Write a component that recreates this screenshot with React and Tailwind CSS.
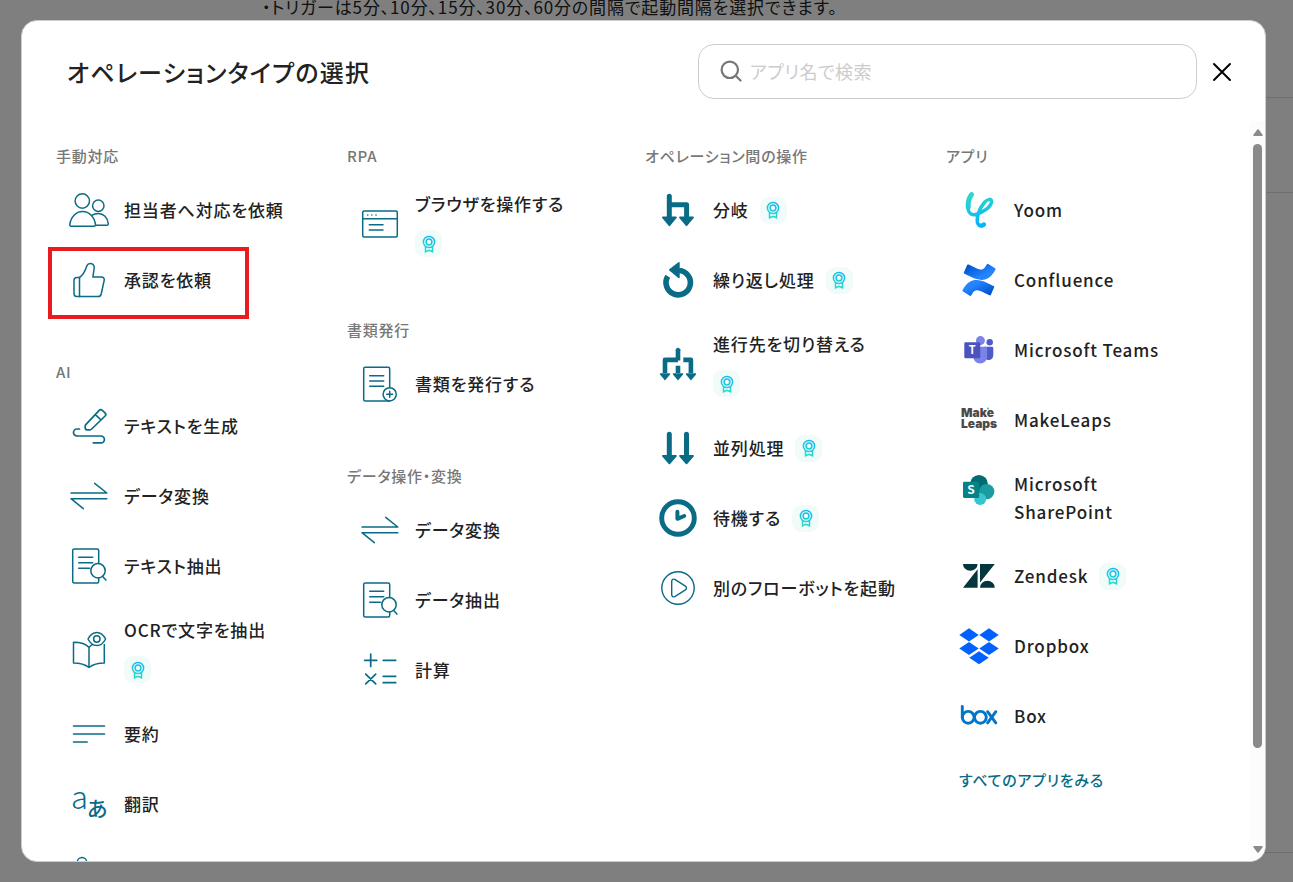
import { useState } from "react";

/* ---------- line icons ---------- */

const LineIcon = ({ children, width = 1.5 }) => (
  <svg
    viewBox="0 0 42 42"
    className="size-[42px] shrink-0 text-[#0a6b86]"
    fill="none"
    stroke="currentColor"
    strokeWidth={width}
    strokeLinecap="round"
    strokeLinejoin="round"
    aria-hidden="true"
  >
    {children}
  </svg>
);

const PeopleIcon = () => (
  <LineIcon>
    <circle cx="14.3" cy="12" r="7.2" />
    <circle cx="30.3" cy="16.8" r="5.7" />
    <path d="M3.2 37.3h22.9c.9 0 1.5-.8 1.4-1.7C26.5 27.8 21.2 22.6 14.6 22.6S2.8 27.8 1.8 35.6c-.1.9.5 1.7 1.4 1.7z" />
    <path d="M23.8 26.4c1.9-1.3 4-2 6.4-2 5.3 0 9.5 4.3 10.1 10.3.1.8-.5 1.5-1.3 1.5H27.6" />
  </LineIcon>
);

const ThumbIcon = () => (
  <LineIcon>
    <path d="M11.5 18.5C15.6 16 17.4 11.5 19 6.6c.5-1.4 1.7-2.1 3.1-2.1 2.6 0 4.5 1.8 4.1 4.4L24.9 18h8.6c1.9 0 3.1 1.6 2.7 3.4l-3 13.6c-.4 1.6-1.6 2.6-3.2 2.6H11.5z" />
    <path d="M11.5 18.5H9c-1.8 0-3 1.2-3 3v13c0 1.8 1.2 3.1 3 3.1h2.5" />
  </LineIcon>
);

const PenIcon = () => (
  <LineIcon width={1.7}>
    <path d="M11.5 24H9a3.5 3.5 0 0 0 0 7h24a3.4 3.4 0 0 1 0 6.8h-7.7" />
    <path d="M17.8 19.6 31.2 5.4a2.2 2.2 0 0 1 3.1-.1l2.7 2.6a2.2 2.2 0 0 1 .1 3.1L23.7 24c-.5.5-1.1.8-1.8.8h-2.7c-1.2 0-2-.8-2-2v-1.6c0-.6.2-1.1.6-1.6zM27.4 9.6l5.6 5.4" />
  </LineIcon>
);

const SwapIcon = () => (
  <LineIcon>
    <path d="M26.7 8.3 38.8 18H3M15.3 33.7 3 23.7h35.8" />
  </LineIcon>
);

const DocSearchIcon = () => (
  <LineIcon>
    <path d="M30.7 18.5V5.5c0-.8-.7-1.5-1.5-1.5h-23c-.8 0-1.5.7-1.5 1.5v31c0 .8.7 1.5 1.5 1.5h23c.8 0 1.5-.7 1.5-1.5V33" />
    <path d="M10.7 12.3h14M10.7 17.7h14M10.7 23.3h10.6" />
    <circle cx="30" cy="25.7" r="7.2" />
    <path d="m34.7 31.4 3.2 3.7" />
  </LineIcon>
);

const DocPlusIcon = () => (
  <LineIcon>
    <path d="M30.7 24.6V5.8c0-.8-.7-1.5-1.5-1.5h-23c-.8 0-1.5.7-1.5 1.5v30.7c0 .8.7 1.5 1.5 1.5h24.5" />
    <path d="M10.7 12.7h14M10.7 18h14M10.7 23.3h14" />
    <circle cx="30.7" cy="31.3" r="6.6" />
    <path d="M27.7 31.3h6M30.7 28.3v6" />
  </LineIcon>
);

const BookEyeIcon = () => (
  <LineIcon>
    <path d="M21 18.5c-3.5-4-9.5-5.2-15.5-5.2V34c6 0 11 1 15.5 4.5C25.5 35 30.3 34 36.3 34V15.6M21 18.5V38M21 18.5c1-1.4 2.2-2.3 3.7-3.1" />
    <path d="M20 10c2.2-4.3 5.2-6.6 8.8-6.6s6.6 2.3 8.8 6.6c-2.2 4.3-5.2 6.6-8.8 6.6S22.2 14.3 20 10z" />
    <circle cx="28.8" cy="10" r="3.2" />
  </LineIcon>
);

const LinesIcon = () => (
  <LineIcon width={1.7}>
    <path d="M5.6 13h30.8M5.6 21h30.8M5.6 29h13.5" />
  </LineIcon>
);

const TranslateIcon = () => (
  <svg viewBox="0 0 42 42" className="size-[42px] shrink-0 overflow-visible" fill="#0a6b86" aria-hidden="true">
    <text x="3" y="26" fontSize="31" fontWeight="300">a</text>
    <text x="19" y="33" fontSize="21" fontWeight="500">あ</text>
  </svg>
);

const VoiceIcon = () => (
  <LineIcon>
    <circle cx="14" cy="9" r="4.6" />
    <path d="M5 36V24c0-4 4-7 9-7s9 3 9 7v12M29 14v14M35 18v6" />
  </LineIcon>
);

const BrowserIcon = () => (
  <LineIcon>
    <rect x="3.7" y="8" width="34.6" height="26" rx="1.5" />
    <path d="M3.7 15.7h34.6M10.3 21.7H24M10.3 27H24" />
    <path d="M8.7 12h.1M12.8 12h.1M17 12h.1" />
  </LineIcon>
);

const CalcIcon = () => (
  <LineIcon width={1.7}>
    <path d="M11.7 5.2v12.2M5.6 11.3h12.2M24.2 11.3h12.5M24.2 27.3h12.5M24.2 33.7h12.5M6.7 25.2l10 9.6M16.7 25.2l-10 9.6" />
  </LineIcon>
);

const PlayIcon = () => (
  <LineIcon width={1.4}>
    <circle cx="21" cy="21" r="16.2" />
    <path d="M14.7 14.3v13.4c0 1.8 1.6 2.7 3.1 1.9l10.6-6.7c1.4-.9 1.4-2.9 0-3.8l-10.6-6.7c-1.5-.8-3.1.1-3.1 1.9z" />
  </LineIcon>
);

/* ---------- solid flow icons ---------- */

const SolidIcon = ({ children }) => (
  <svg
    viewBox="0 0 42 42"
    className="size-[42px] shrink-0 text-[#0a6b86]"
    fill="currentColor"
    stroke="currentColor"
    strokeLinejoin="round"
    strokeLinecap="round"
    aria-hidden="true"
  >
    {children}
  </svg>
);

const BranchIcon = () => (
  <SolidIcon>
    <path d="M12.3 7.2V29M12.3 15.8h17.3V29" fill="none" strokeWidth="5" />
    <path d="M5.9 28.5h13l-6.5 7.7zM23 28.5h13l-6.5 7.7z" strokeWidth="1.8" />
  </SolidIcon>
);

const LoopIcon = () => (
  <SolidIcon>
    <path d="M22 11.5A12.2 12.2 0 1 1 10.8 17.3" fill="none" strokeWidth="5.6" strokeLinecap="butt" />
    <path d="M12.8 10.8 21.9 3.8v14.6z" strokeWidth="1.6" />
  </SolidIcon>
);

const SwitchIcon = () => (
  <SolidIcon>
    <path d="M21 6.6v11M8 30V16.9h13M26.3 16.9h7.6V30M21 22.8V30" fill="none" strokeWidth="4.6" strokeLinecap="butt" />
    <path d="M3.6 31h8.8L8 36.3zM16.6 31h8.8L21 36.3zM29.6 31h8.8L34 36.3z" strokeWidth="1.6" />
    <circle cx="21" cy="7" r="1.8" strokeWidth="1" />
  </SolidIcon>
);

const ParallelIcon = () => (
  <SolidIcon>
    <path d="M12.3 7.2V29M29.5 7.2V29" fill="none" strokeWidth="5" />
    <path d="M5.9 29h13l-6.5 7.4zM23 29h13l-6.5 7.4z" strokeWidth="1.8" />
  </SolidIcon>
);

const ClockIcon = () => (
  <SolidIcon>
    <circle cx="21" cy="21" r="16.3" fill="none" strokeWidth="4.9" />
    <path d="M20.4 14.8v7l6.8-2.8" fill="none" strokeWidth="4" />
  </SolidIcon>
);

/* ---------- app logos ---------- */

const Logo = ({ children }) => (
  <svg viewBox="0 0 42 42" className="size-[42px] shrink-0" aria-hidden="true">
    {children}
  </svg>
);

const YoomLogo = () => (
  <Logo>
    <defs>
      <linearGradient id="yoom" gradientUnits="userSpaceOnUse" x1="15" y1="3" x2="24" y2="39">
        <stop offset="0" stopColor="#2fdcc4" />
        <stop offset="1" stopColor="#05b0ff" />
      </linearGradient>
    </defs>
    <g fill="none" stroke="url(#yoom)" strokeLinecap="round">
      <path d="M13.6 5.6C11 9 9.9 14 10.2 18" strokeWidth="5" />
      <path d="M13 6C10 10 9.2 15 9.9 19.5c.8 4.7 3.6 7 7.6 6C24 24 33 18.5 33.6 12.5c.2-3.2-4-2.8-7.2 1-3.5 4.3-6.8 11.5-7.2 17-.3 4.6 1.8 6.7 4.3 6.3 1.3-.2 2.2-.8 2.8-1.5" strokeWidth="3.5" />
      <path d="M22.4 36.5c1.4.3 2.7-.2 3.4-1.1" strokeWidth="4.2" />
    </g>
  </Logo>
);

const ConfluenceLogo = () => (
  <svg viewBox="-34 -38 323 323" className="size-[42px] shrink-0" aria-hidden="true">
    <defs>
      <linearGradient id="confA" x1="1" y1="1" x2="0.2" y2="0.3">
        <stop offset="0.15" stopColor="#0052cc" />
        <stop offset="0.9" stopColor="#2684ff" />
      </linearGradient>
      <linearGradient id="confB" x1="0" y1="0" x2="0.8" y2="0.7">
        <stop offset="0.15" stopColor="#0052cc" />
        <stop offset="0.9" stopColor="#2684ff" />
      </linearGradient>
    </defs>
    <path fill="url(#confA)" d="M9.26 187.33c-2.64 4.307-5.607 9.305-8.126 13.287a8.127 8.127 0 0 0 2.722 11.052l52.823 32.507a8.127 8.127 0 0 0 11.256-2.763c2.113-3.536 4.835-8.127 7.801-13.044 20.926-34.538 41.974-30.312 79.925-12.19l52.376 24.908a8.127 8.127 0 0 0 10.93-4.063l25.152-56.886a8.127 8.127 0 0 0-4.063-10.646c-11.052-5.201-33.034-15.562-52.823-25.111-71.189-34.579-131.691-32.344-177.973 42.949z" />
    <path fill="url(#confB)" d="M246.115 58.232c2.641-4.307 5.607-9.305 8.127-13.287a8.127 8.127 0 0 0-2.723-11.052L198.696 1.386a8.127 8.127 0 0 0-11.58 2.682c-2.113 3.535-4.835 8.127-7.802 13.043-20.926 34.538-41.974 30.313-79.925 12.19L47.176 4.515a8.127 8.127 0 0 0-10.93 4.063L11.093 65.464a8.127 8.127 0 0 0 4.063 10.646c11.052 5.202 33.035 15.563 52.823 25.112 71.352 34.538 131.854 32.222 178.136-42.99z" />
  </svg>
);

const TeamsLogo = () => (
  <Logo>
    <circle cx="31.7" cy="13.3" r="3.2" fill="#5059c9" />
    <path d="M26 17.7h8c.7 0 1.3.6 1.3 1.3v7c0 3-2.2 5-4.8 5S26 29 26 26z" fill="#5059c9" />
    <circle cx="22.4" cy="11.6" r="4.5" fill="#7b83eb" />
    <path d="M15.3 17.7h12.4c.8 0 1.4.6 1.4 1.4v8.3c0 4-3 7-6.9 7s-6.9-3-6.9-7z" fill="#7b83eb" />
    <rect x="6.3" y="13.3" width="16" height="16" rx="1.4" fill="#4b53bc" />
    <text x="14.3" y="25.4" fontSize="11" fontWeight="700" fill="#fff" textAnchor="middle">T</text>
  </Logo>
);

const MakeLeapsLogo = () => (
  <Logo>
    <g className="font-['Inter',sans-serif] font-black" fill="#4a4a4a" fontSize="12">
      <text x="3" y="18">Make</text>
      <text x="3" y="29">Leaps</text>
    </g>
    <circle cx="30" cy="9.5" r="1" fill="#3fbf8a" />
  </Logo>
);

const SharePointLogo = () => (
  <Logo>
    <circle cx="21" cy="13.7" r="8.8" fill="#036c70" />
    <circle cx="28.7" cy="21.6" r="7.7" fill="#1a9ba1" />
    <circle cx="22.2" cy="29" r="6" fill="#37c6d0" />
    <rect x="5" y="11.7" width="16.2" height="16.2" rx="1.4" fill="#038387" />
    <text x="13.1" y="24" fontSize="12" fontWeight="700" fill="#fff" textAnchor="middle">S</text>
  </Logo>
);

const ZendeskLogo = () => (
  <Logo>
    <path
      fill="#03363d"
      d="M5 9h14.6a7.3 6.8 0 0 1-14.6 0zM19.6 14.3v18.4H5zM22 9h14.8L22 27.4zM22 32.7a7.4 7 0 0 1 14.8 0z"
    />
  </Logo>
);

const DropboxLogo = () => (
  <Logo>
    <path
      fill="#0061ff"
      d="M11 3.3 20.7 10 11 16.4 1.3 10zM31 3.3 40.7 10 31 16.4 21.3 10zM11 17 20.7 23.5 11 30 1.3 23.5zM31 17 40.7 23.5 31 30 21.3 23.5zM21 26.3 30.7 32.7 21 39.2 11.3 32.7z"
    />
  </Logo>
);

const BoxLogo = () => (
  <Logo>
    <g fill="none" stroke="#0075c9" strokeWidth="2.9" strokeLinecap="round">
      <line x1="4.3" y1="11.5" x2="4.3" y2="22.3" />
      <circle cx="10.2" cy="22.3" r="5.9" />
      <circle cx="22.4" cy="22.3" r="5.9" />
      <line x1="29.6" y1="16.7" x2="37.8" y2="27.9" />
      <line x1="37.8" y1="16.7" x2="29.6" y2="27.9" />
    </g>
  </Logo>
);

/* ---------- modal content ---------- */

const columns = [
  [
    {
      title: "手動対応",
      items: [
        { label: "担当者へ対応を依頼", icon: PeopleIcon },
        { label: "承認を依頼", icon: ThumbIcon, marked: true },
      ],
    },
    {
      title: "AI",
      items: [
        { label: "テキストを生成", icon: PenIcon },
        { label: "データ変換", icon: SwapIcon },
        { label: "テキスト抽出", icon: DocSearchIcon },
        { label: "OCRで文字を抽出", icon: BookEyeIcon, badge: "below" },
        { label: "要約", icon: LinesIcon },
        { label: "翻訳", icon: TranslateIcon },
        { label: "", icon: VoiceIcon },
      ],
    },
  ],
  [
    { title: "RPA", items: [{ label: "ブラウザを操作する", icon: BrowserIcon, badge: "below" }] },
    { title: "書類発行", items: [{ label: "書類を発行する", icon: DocPlusIcon }] },
    {
      title: "データ操作・変換",
      items: [
        { label: "データ変換", icon: SwapIcon },
        { label: "データ抽出", icon: DocSearchIcon },
        { label: "計算", icon: CalcIcon },
      ],
    },
  ],
  [
    {
      title: "オペレーション間の操作",
      items: [
        { label: "分岐", icon: BranchIcon, badge: "inline" },
        { label: "繰り返し処理", icon: LoopIcon, badge: "inline" },
        { label: "進行先を切り替える", icon: SwitchIcon, badge: "below" },
        { label: "並列処理", icon: ParallelIcon, badge: "inline" },
        { label: "待機する", icon: ClockIcon, badge: "inline" },
        { label: "別のフローボットを起動", icon: PlayIcon },
      ],
    },
  ],
  [
    {
      title: "アプリ",
      items: [
        { label: "Yoom", icon: YoomLogo },
        { label: "Confluence", icon: ConfluenceLogo },
        { label: "Microsoft Teams", icon: TeamsLogo },
        { label: "MakeLeaps", icon: MakeLeapsLogo },
        { label: "Microsoft SharePoint", icon: SharePointLogo, multiline: true },
        { label: "Zendesk", icon: ZendeskLogo, badge: "inline" },
        { label: "Dropbox", icon: DropboxLogo },
        { label: "Box", icon: BoxLogo },
      ],
      link: "すべてのアプリをみる",
    },
  ],
];

const Badge = () => (
  <span className="flex size-[27px] shrink-0 items-center justify-center rounded-[9px] bg-[#f0fbfa]">
    <svg viewBox="0 0 14 18" className="h-[18px] w-[14px]" fill="none" stroke="url(#badge)" strokeWidth="1.5" aria-hidden="true">
      <defs>
        <linearGradient id="badge" gradientUnits="userSpaceOnUse" x1="11" y1="1" x2="4" y2="17">
          <stop offset="0" stopColor="#0fb4f5" />
          <stop offset="1" stopColor="#2bdfc6" />
        </linearGradient>
      </defs>
      <circle cx="7" cy="7" r="5.6" />
      <circle cx="7" cy="7" r="2.9" />
      <path d="M3.5 11.5v5.3L7 15.4l3.5 1.4v-5.3" />
    </svg>
  </span>
);

const Item = ({ item }) => {
  const Icon = item.icon;
  return (
    <li className="relative">
      <button
        type="button"
        className={`flex w-full gap-3.5 pl-3 text-left ${item.multiline ? "items-start py-[15px]" : "items-center py-3.5"}`}
      >
        <Icon />
        <span
          className={
            item.badge === "below"
              ? "flex flex-col items-start gap-3 pt-px pb-0.5"
              : "flex max-w-44 items-center gap-[11px]"
          }
        >
          <span className={`text-[17px] leading-7 font-medium tracking-wider text-[#222] ${item.multiline ? "" : "whitespace-nowrap"}`}>
            {item.label}
          </span>
          {item.badge && <Badge />}
        </span>
      </button>
      {item.marked && (
        <span className="pointer-events-none absolute top-0.5 -left-2 h-[72px] w-[201px] border-4 border-[#e81c1e]"></span>
      )}
    </li>
  );
};

const Section = ({ section }) => (
  <section>
    <h3 className="mb-2 text-[15px] leading-[22px] font-medium tracking-wider text-[#777]">{section.title}</h3>
    <ul>
      {section.items.map((item) => (
        <Item key={item.label} item={item} />
      ))}
    </ul>
    {section.link && (
      <a href="#apps" className="mt-[18px] block pl-[13px] text-[15px] leading-[22px] font-medium tracking-wider text-[#0a6b86]">
        {section.link}
      </a>
    )}
  </section>
);

const ScrollBar = () => (
  <div className="flex w-[15px] shrink-0 flex-col items-center bg-[#fcfcfc] py-2" aria-hidden="true">
    <svg viewBox="0 0 10 7" className="h-[7px] w-[10px] fill-[#8a8a8a]">
      <path d="M4.3.6.4 5.8c-.4.5 0 1.2.6 1.2h8c.6 0 1-.7.6-1.2L5.7.6a.9.9 0 0 0-1.4 0z" />
    </svg>
    <div className="my-2 w-full flex-1">
      <div className="mx-auto h-[87%] w-[9px] rounded-full bg-[#8a8a8a]"></div>
    </div>
    <svg viewBox="0 0 10 7" className="h-[7px] w-[10px] rotate-180 fill-[#8a8a8a]">
      <path d="M4.3.6.4 5.8c-.4.5 0 1.2.6 1.2h8c.6 0 1-.7.6-1.2L5.7.6a.9.9 0 0 0-1.4 0z" />
    </svg>
  </div>
);

const App = () => {
  const [query, setQuery] = useState("");

  return (
    <div className="relative h-screen overflow-hidden bg-white font-['Noto_Sans_CJK_JP','Noto_Sans',sans-serif] [font-feature-settings:'palt']">
      {/* Page behind the modal */}
      <div className="flex h-full flex-col pl-[262px]">
        <p className="h-[97px] text-[17px] leading-[14px] tracking-wider text-[#222]">
          ・トリガーは5分、10分、15分、30分、60分の間隔で起動間隔を選択できます。
        </p>
        <div className="h-[95px] border-t border-[#ddd]"></div>
        <div className="mb-[29px] flex-1 border-y border-[#ddd]"></div>
      </div>

      {/* Modal */}
      <div className="absolute inset-0 bg-black/50 py-5 pr-[27px] pl-[21px]">
        <div
          role="dialog"
          aria-labelledby="modal-title"
          className="flex h-full flex-col overflow-hidden rounded-2xl border border-[#ccc] bg-white"
        >
          <header className="flex items-center gap-[15px] pt-[23px] pr-[33px] pb-[22px] pl-[45px]">
            <h2 id="modal-title" className="flex-1 text-2xl font-medium tracking-wider text-[#222]">
              オペレーションタイプの選択
            </h2>
            <label className="flex h-[55px] w-[499px] items-center gap-2 rounded-2xl border border-[#ccc] px-[21px] pb-0.5">
              <svg viewBox="0 0 22 22" className="size-[22px] shrink-0" fill="none" stroke="#777" strokeWidth="2.2" strokeLinecap="round" aria-hidden="true">
                <circle cx="9.8" cy="9.8" r="8.2" />
                <path d="m16 16 4.5 4.5" />
              </svg>
              <input
                type="text"
                aria-label="アプリ名で検索"
                placeholder="アプリ名で検索"
                value={query}
                onChange={(e) => setQuery(e.target.value)}
                className="min-w-0 flex-1 text-lg tracking-wide text-[#222] outline-none placeholder:text-[#ccc]"
              />
            </label>
            <button type="button" aria-label="閉じる">
              <svg viewBox="0 0 20 20" className="size-5" fill="none" stroke="#000" strokeWidth="2" strokeLinecap="round" aria-hidden="true">
                <path d="m2 2 16 16M18 2 2 18" />
              </svg>
            </button>
          </header>

          <div className="flex min-h-0 flex-1">
            <div className="grid flex-1 grid-cols-[291fr_298fr_301fr_304fr] overflow-y-auto pt-6 pl-[34px] [scrollbar-width:none]">
              {columns.map((sections, i) => (
                <div key={i} className="flex flex-col gap-[46px]">
                  {sections.map((section) => (
                    <Section key={section.title} section={section} />
                  ))}
                </div>
              ))}
            </div>
            <ScrollBar />
          </div>
        </div>
      </div>
    </div>
  );
};

export default App;
